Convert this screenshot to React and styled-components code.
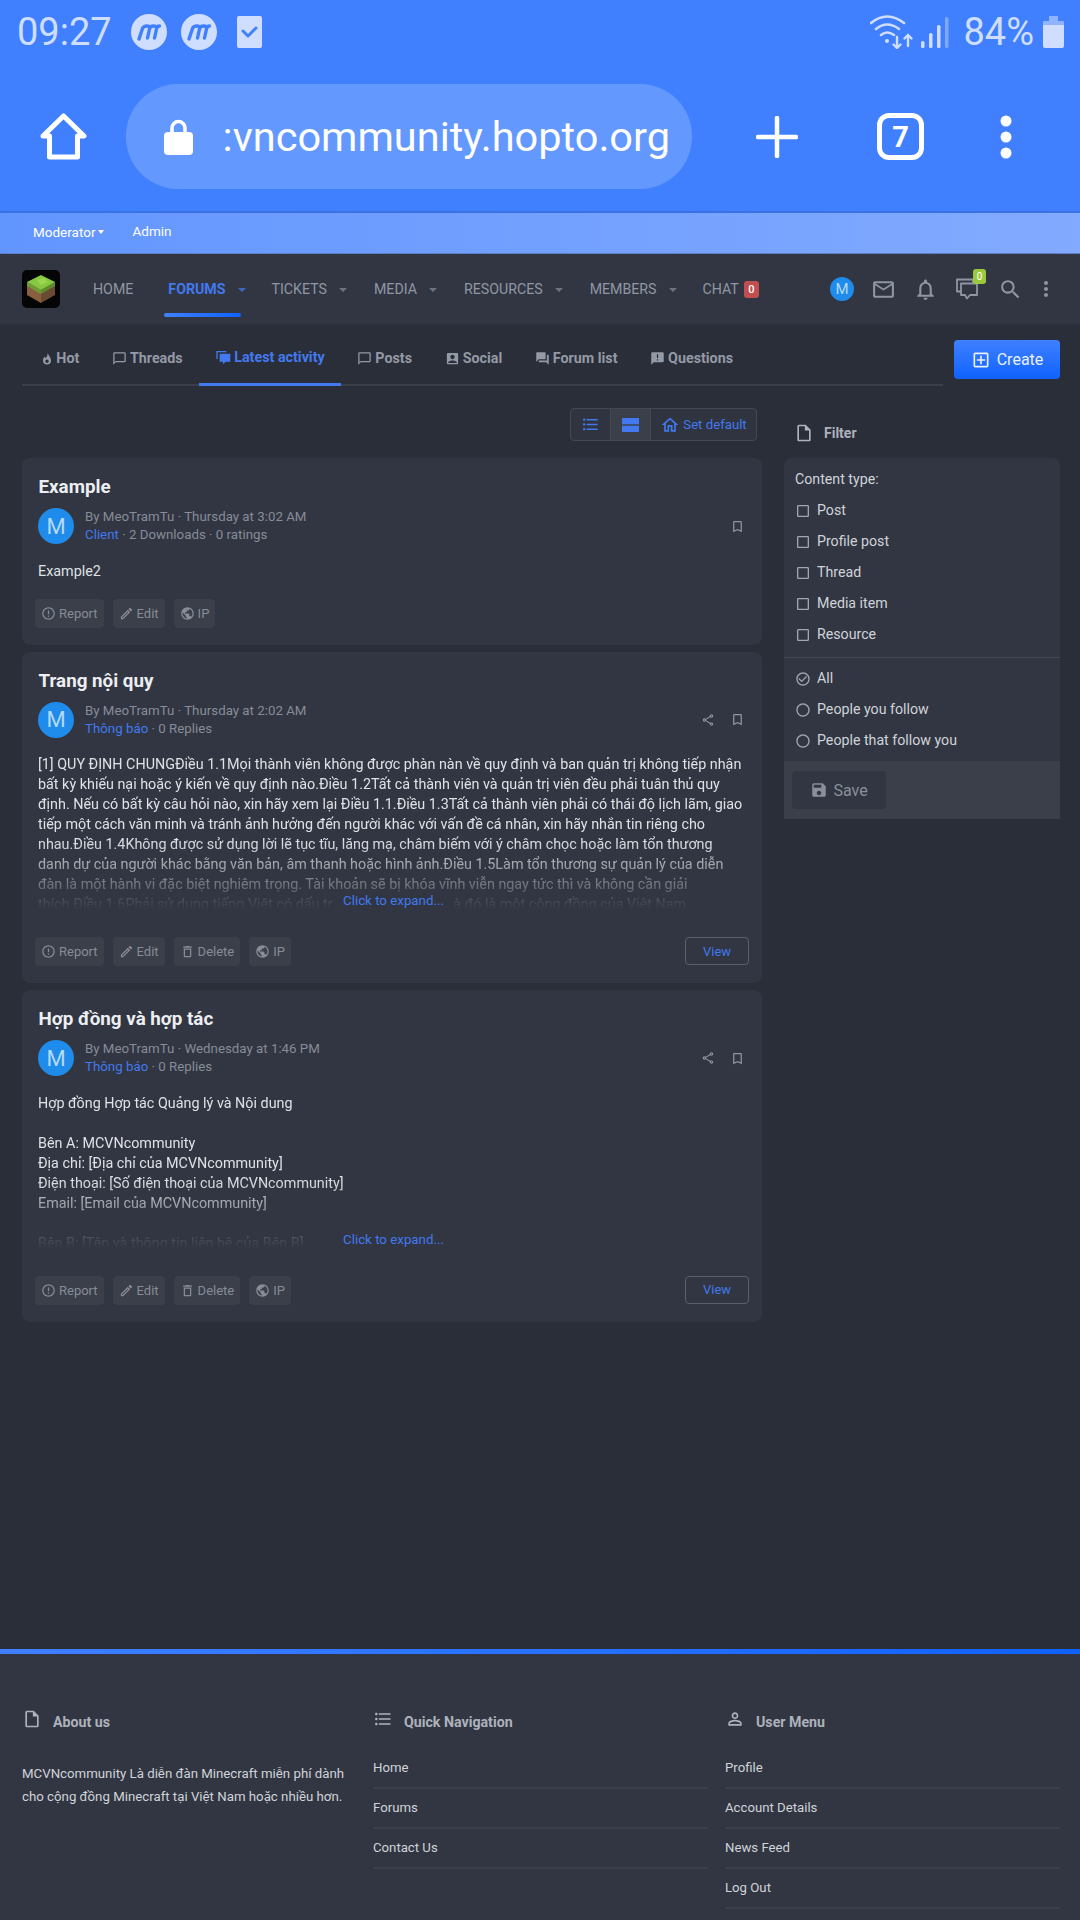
import React from 'react';
import styled, {createGlobalStyle} from 'styled-components';
import {
	MdChatBubbleOutline, MdAccountBox, MdForum, MdAnnouncement,
	MdFormatListBulleted, MdOutlineHome, MdErrorOutline, MdOutlineEdit,
	MdDeleteOutline, MdPublic, MdBookmarkBorder, MdOutlineShare, MdOutlineInsertDriveFile,
	MdSave, MdOutlineAddBox, MdOutlineEmail, MdNotificationsNone, MdSearch, MdMoreVert,
	MdPersonOutline, MdCheckBoxOutlineBlank, MdRadioButtonUnchecked, MdCheckCircleOutline
} from 'react-icons/md';

const BLUE = '#4279ee';
const CARD = '#313642';

const GlobalStyle = createGlobalStyle`
	html, body {
		margin: 0;
		padding: 0;
		background: #2a2e39;
	}
	* {
		box-sizing: border-box;
	}
`;

const Page = styled.div`
	display: flex;
	flex-direction: column;
	width: 1080px;
	height: 1920px;
	overflow: hidden;
	font-family: Roboto, "Noto Sans", sans-serif;
	background: #2a2e39;
`;

/* phone chrome */
const Chrome = styled.div`
	height: 213px;
	flex: none;
	background: #4080ff;
	border-bottom: 2px solid #3a72e6;
`;

const StatusBar = styled.div`
	display: flex;
	align-items: center;
	height: 64px;
	padding: 0 16px 0 17px;
	color: #cfdeff;
`;

const Clock = styled.div`
	font-size: 38px;
	line-height: 1;
	width: 114px;
`;

const StatusIcon = styled.svg`
	display: block;
	flex: none;
	margin-right: ${props => props.$gap || 0}px;
`;

const Spacer = styled.div`
	flex: 1;
`;

const Battery = styled.div`
	font-size: 38px;
	line-height: 1;
	margin: 0 9px 0 14px;
`;

const BrowserBar = styled.div`
	display: flex;
	align-items: center;
	height: 105px;
	margin-top: 20px;
	padding-left: 40px;
`;

const AddressPill = styled.div`
	display: flex;
	align-items: center;
	width: 566px;
	height: 105px;
	margin-left: 39px;
	padding-left: 38px;
	border-radius: 52px;
	background: #6398ff;
`;

const Address = styled.div`
	width: 449px;
	margin-left: 28px;
	font-size: 41.5px;
	line-height: 1.3;
	color: #fff;
	white-space: nowrap;
	text-align: right;
`;

const TabCount = styled.div`
	display: flex;
	align-items: center;
	justify-content: center;
	width: 47px;
	height: 47px;
	margin-left: 79px;
	border: 5px solid #fff;
	border-radius: 12px;
	font-size: 29px;
	font-weight: 700;
	color: #fff;
`;

/* staff bar */
const StaffBar = styled.div`
	display: flex;
	align-items: center;
	flex: none;
	height: 41px;
	padding: 0 33px 4px;
	background: linear-gradient(90deg, #6296ff, #82aaff);
	border-bottom: 1px solid #5e7fc4;
	font-size: 13.5px;
	color: #fff;
`;

const StaffLink = styled.span`
	display: flex;
	align-items: center;
	margin-right: ${props => props.$gap || 0}px;
	transform: translateY(${props => props.$shift || 0}px);
`;

const SmallCaret = styled.i`
	display: inline-block;
	margin-left: 3px;
	border: 3px solid transparent;
	border-top: 4px solid currentColor;
	border-bottom: 0;
`;

/* main nav */
const Nav = styled.nav`
	display: flex;
	align-items: center;
	flex: none;
	height: 71px;
	padding: 0 22px 0 22px;
	background: ${CARD};
	border-bottom: 1px solid #2c303b;
`;

const Logo = styled.svg`
	display: block;
	flex: none;
	margin-right: 33px;
`;

const NavItem = styled.a`
	position: relative;
	display: flex;
	align-items: center;
	margin-right: ${props => props.$gap}px;
	font-size: 14.2px;
	font-weight: ${props => props.$active ? 700 : 400};
	color: ${props => props.$active ? BLUE : '#9096a3'};
	text-transform: uppercase;
	${props => props.$active && `
		&::after {
			content: '';
			position: absolute;
			left: -4px;
			right: 5px;
			bottom: -20px;
			height: 4px;
			border-radius: 2px;
			background: linear-gradient(90deg, #4080ff, #0f62fe);
		}
	`}
`;

const NavCaret = styled.i`
	display: block;
	margin-left: 12px;
	border: 4px solid transparent;
	border-top: 4px solid ${props => props.$active ? '#3f68bd' : '#6d727e'};
	border-bottom: 0;
	margin-top: 2px;
`;

const Badge = styled.span`
	display: flex;
	align-items: center;
	justify-content: center;
	width: 15px;
	height: 17px;
	margin-left: 5px;
	border-radius: 3px;
	background: #c0504f;
	color: #fff;
	font-size: 11px;
	font-weight: 500;
`;

const NavIcons = styled.div`
	display: flex;
	align-items: center;
	margin-left: auto;
	color: #8f95a3;
`;

const NavIconSlot = styled.span`
	position: relative;
	display: flex;
	margin-left: ${props => props.$gap}px;
`;

const AlertBadge = styled.span`
	position: absolute;
	top: -8px;
	right: -7px;
	display: flex;
	align-items: center;
	justify-content: center;
	width: 13px;
	height: 15px;
	border-radius: 3px;
	background: #9ac93b;
	color: #fff;
	font-size: 10px;
`;

const Avatar = styled.div`
	display: flex;
	align-items: center;
	justify-content: center;
	flex: none;
	width: ${props => props.$size}px;
	height: ${props => props.$size}px;
	border-radius: 50%;
	background: #1f8bea;
	color: #b5d9f7;
	font-size: ${props => Math.round(props.$size * 0.62)}px;
`;

/* body */
const Main = styled.main`
	flex: 1;
	min-height: 0;
	padding: 0 20px 0 22px;
`;

const TabRow = styled.div`
	display: flex;
	align-items: flex-start;
	padding-top: 14px;
`;

const Tabs = styled.div`
	display: flex;
	flex: 1;
	height: 47px;
	padding-left: 3px;
	border-bottom: 2px solid #3a3f4a;
`;

const Tab = styled.a`
	display: flex;
	align-items: center;
	gap: 3px;
	height: 47px;
	padding: 0 16.3px 9px;
	font-size: 14.3px;
	font-weight: 700;
	color: ${props => props.$active ? BLUE : '#9499a6'};
	border-bottom: ${props => props.$active ? `3px solid ${BLUE}` : '0'};
	white-space: nowrap;
`;

const CreateButton = styled.button`
	display: flex;
	align-items: center;
	justify-content: center;
	gap: 6px;
	width: 106px;
	height: 39px;
	margin: 1px 0 0 11px;
	border: 0;
	border-radius: 4px;
	background: linear-gradient(180deg, #3f80ff, #0f62fe);
	color: #e9f0ff;
	font-family: inherit;
	font-size: 16px;
`;

const Columns = styled.div`
	display: flex;
	align-items: flex-start;
	gap: 22px;
`;

const Feed = styled.div`
	display: flex;
	flex-direction: column;
	width: 740px;
	gap: 7px;
`;

const ToggleBar = styled.div`
	display: flex;
	justify-content: flex-end;
	height: 65px;
	padding: 22px 5px 0 0;
`;

const ToggleGroup = styled.div`
	display: flex;
	height: 33px;
	border: 1px solid #434854;
	border-radius: 4px;
	background: #2f3440;
	color: ${BLUE};
`;

const ToggleButton = styled.span`
	display: flex;
	align-items: center;
	justify-content: center;
	gap: 3px;
	width: ${props => props.$width}px;
	font-size: 13.2px;
	background: ${props => props.$on ? '#3a3f4a' : 'transparent'};
	border-left: ${props => props.$first ? '0' : '1px solid #434854'};
`;

const Card = styled.article`
	display: flex;
	flex-direction: column;
	padding: 17px 13px 17px 16px;
	border-radius: 8px;
	background: ${CARD};
`;

const CardTitle = styled.h2`
	margin: 0 0 8px 0.5px;
	font-size: 18.8px;
	line-height: 25px;
	font-weight: 700;
	color: #eceef1;
`;

const MetaRow = styled.div`
	display: flex;
	align-items: center;
	gap: 11px;
`;

const MetaText = styled.div`
	flex: 1;
	font-size: 13.3px;
	line-height: 18px;
	color: #878c97;
`;

const Link = styled.span`
	color: ${BLUE};
`;

const MetaIcons = styled.div`
	display: flex;
	align-items: center;
	gap: 15px;
	color: #8f95a3;
	padding-right: 4px;
`;

const Body = styled.div`
	position: relative;
	margin: 17.5px 0 0;
	font-size: 14.35px;
	line-height: 20px;
	color: #dfe1e5;
	${props => props.$clipped && `
		height: 160px;
		margin-bottom: 22px;
	`}
	${props => !props.$clipped && `
		margin-bottom: 17px;
	`}
`;

const BodyText = styled.div`
	width: 708px;
	${props => props.$clipped && `
		height: 160px;
		overflow: hidden;
		-webkit-mask-image: linear-gradient(#000 85px, transparent 155px);
		mask-image: linear-gradient(#000 85px, transparent 155px);
	`}
`;

const Expand = styled.a`
	position: absolute;
	left: 0;
	right: 0;
	bottom: 5px;
	text-align: center;
	font-size: 13.3px;
	line-height: 18px;
	color: ${BLUE};
	span {
		padding: 0 10px;
		background: ${CARD};
	}
`;

const ActionRow = styled.div`
	display: flex;
	align-items: flex-start;
	gap: 9px;
	margin-left: -3px;
`;

const ActionButton = styled.a`
	display: flex;
	align-items: center;
	gap: 3px;
	height: 29px;
	padding: 0 6px;
	border-radius: 4px;
	background: #3a3f4a;
	color: #878c97;
	font-size: 13px;
`;

const ViewButton = styled.a`
	display: flex;
	align-items: center;
	justify-content: center;
	width: 64px;
	height: 28px;
	margin-left: auto;
	border: 1px solid #5a606c;
	border-radius: 4px;
	color: ${BLUE};
	font-size: 13px;
`;

const Side = styled.aside`
	width: 276px;
	padding-top: 28px;
`;

const SideHead = styled.div`
	display: flex;
	align-items: center;
	height: 38px;
	margin-bottom: 6px;
	padding-left: 10px;
	gap: 10px;
	color: #aeb2bc;
	font-size: 14px;
	font-weight: 700;
`;

const Panel = styled.div`
	border-radius: 8px 8px 0 0;
	background: ${CARD};
	color: #d0d3d9;
	font-size: 14.2px;
	overflow: hidden;
`;

const PanelSection = styled.div`
	padding: ${props => props.$line ? '12px 11px 7px' : '5px 11px 5px'};
	border-bottom: ${props => props.$line ? '1px solid #434854' : '0'};
`;

const PanelLabel = styled.div`
	height: 20px;
	margin-bottom: 5px;
	line-height: 18px;
`;

const Option = styled.div`
	display: flex;
	align-items: center;
	gap: 6px;
	height: 31px;
	color: #d0d3d9;
	svg {
		color: #a0a5b0;
	}
`;

const OptionLabel = styled.div`
	height: 20px;
	line-height: 18px;
`;

const PanelFooter = styled.div`
	padding: 10px 8px 10px;
	background: #3a3f4a;
`;

const SaveButton = styled.button`
	display: flex;
	align-items: center;
	justify-content: center;
	gap: 5px;
	width: 94px;
	height: 38px;
	border: 0;
	border-radius: 4px;
	background: #313642;
	color: #8a8f9a;
	font-family: inherit;
	font-size: 16px;
`;

/* footer */
const Footer = styled.footer`
	flex: none;
	height: 271px;
	padding: 0 20px 0 22px;
	background: ${CARD};
	border-top: 5px solid #0f62fe;
	border-image: linear-gradient(90deg, #4080ff, #0f62fe) 1;
`;

const FooterGrid = styled.div`
	display: grid;
	grid-template-columns: 334px 335px 335px;
	gap: 17px;
	padding-top: 56px;
`;

const FooterHead = styled.div`
	display: flex;
	align-items: center;
	gap: 11px;
	height: 24px;
	margin-bottom: 14.5px;
	color: #aeb2bc;
	font-size: 14.2px;
	font-weight: 700;
	svg {
		transform: translateY(-3px);
	}
`;

const FooterText = styled.p`
	margin: 29px 0 0;
	font-size: 13.25px;
	line-height: 22.5px;
	color: #d0d3d9;
`;

const FooterLink = styled.a`
	display: flex;
	align-items: center;
	height: 40px;
	border-bottom: 2px solid #3a3f4a;
	font-size: 13.2px;
	color: #d0d3d9;
`;

const AppIcon = () => (
	<StatusIcon width="36" height="36" viewBox="0 0 36 36" $gap={14}>
		<circle cx="18" cy="18" r="18" fill="#cfdeff"/>
		<path d="M8 25 L11.500 14.500 Q12.500 12 16 12 Q19 12 18.500 15 L16.500 24 M18.500 15 Q19 12 22.500 12 Q26 12 25.500 15 L23.500 24 M25.500 15 Q26 12 28.500 12" fill="none" stroke="#4080ff" strokeWidth="3.4" strokeLinecap="round" strokeLinejoin="round"/>
	</StatusIcon>
);

const StatusIcons = () => (
	<React.Fragment>
		<AppIcon/>
		<AppIcon/>
		<StatusIcon width="25" height="32" viewBox="0 0 25 32" style={{marginLeft: 6}}>
			<rect width="25" height="32" rx="2" fill="#cfdeff"/>
			<path d="M6 15 L11 20 L19 12" fill="none" stroke="#4080ff" strokeWidth="3" strokeLinecap="round" strokeLinejoin="round"/>
		</StatusIcon>
		<Spacer/>
		<StatusIcon width="44" height="34" viewBox="0 0 44 34" fill="none" stroke="#cfdeff" strokeLinecap="round" strokeWidth="2.6" style={{marginRight: 7}}>
			<path d="M1 8 Q17 -5 34 8"/>
			<path d="M6 14 Q17 5 29 14"/>
			<path d="M11 20 Q17 15 24 20"/>
			<circle cx="17" cy="26" r="2" fill="#cfdeff" stroke="none"/>
			<path d="M27 22 V33 M23.5 29.5 L27 33 L30.5 29.5" strokeWidth="2.4"/>
			<path d="M38 31 V20 M34.5 23.5 L38 20 L41.500 23.5" strokeWidth="2.4"/>
		</StatusIcon>
		<StatusIcon width="28" height="31" viewBox="0 0 28 31">
			<rect x="0" y="24" width="3.500" height="7" rx="1.500" fill="#cfdeff"/>
			<rect x="8" y="16" width="3.500" height="15" rx="1.500" fill="#cfdeff"/>
			<rect x="16" y="8" width="3.500" height="23" rx="1.500" fill="#cfdeff"/>
			<rect x="24" y="0" width="3.500" height="31" rx="1.500" fill="#7fa8ff"/>
		</StatusIcon>
		<Battery>84%</Battery>
		<StatusIcon width="21" height="32" viewBox="0 0 21 32">
			<rect x="6" y="0" width="9" height="5" fill="#8fb3ff"/>
			<rect x="0" y="5" width="21" height="5" rx="1" fill="#8fb3ff"/>
			<path d="M0 9 H21 V30 Q21 32 19 32 H2 Q0 32 0 30 Z" fill="#cfdeff"/>
		</StatusIcon>
	</React.Fragment>
);

const BrowserHome = () => (
	<StatusIcon width="47" height="47" viewBox="0 0 47 47" fill="none" stroke="#fff" strokeWidth="5" strokeLinejoin="round" strokeLinecap="round">
		<path d="M3 23 L23.500 3 L44 23 H37.500 V44 H9.500 V23 Z"/>
	</StatusIcon>
);

const LockIcon = () => (
	<StatusIcon width="29" height="36" viewBox="0 0 29 36" fill="#fff">
		<path d="M8 14 V9 A6.500 6.500 0 0 1 21 9 V14" fill="none" stroke="#fff" strokeWidth="3.500"/>
		<rect y="13" width="29" height="23" rx="4"/>
	</StatusIcon>
);

const PlusIcon = () => (
	<StatusIcon width="42" height="42" viewBox="0 0 42 42" style={{marginLeft: 64}}>
		<path d="M21 2 V40 M2 21 H40" stroke="#fff" strokeWidth="4.500" strokeLinecap="round"/>
	</StatusIcon>
);

const DotsIcon = () => (
	<StatusIcon width="12" height="44" viewBox="0 0 12 44" fill="#fff" style={{marginLeft: 76}}>
		<circle cx="6" cy="6" r="5.500"/>
		<circle cx="6" cy="22" r="5.500"/>
		<circle cx="6" cy="38" r="5.500"/>
	</StatusIcon>
);

const GrassLogo = () => (
	<Logo width="38" height="38" viewBox="0 0 38 38">
		<rect width="38" height="38" rx="5" fill="#050505"/>
		<path d="M5 12 L19 20 V33 L5 25 Z" fill="#8a5f3f"/>
		<path d="M33 12 L19 20 V33 L33 25 Z" fill="#6a4a33"/>
		<path d="M5 12 L19 20 V24 L5 16 Z" fill="#6f9a35"/>
		<path d="M33 12 L19 20 V24 L33 16 Z" fill="#5f8a2e"/>
		<path d="M19 5 L33 12 L19 20 L5 12 Z" fill="#86c940"/>
		<path d="M15 10 L22 8 L26 12 L19 15 Z" fill="#9ad64f"/>
	</Logo>
);

const FlameIcon = () => (
	<svg width="12" height="13" viewBox="0 0 12 13" fill="currentColor" fillRule="evenodd">
		<path d="M6.500 0.500 C7 3 10 5 10 8.500 A4 4 0 0 1 2 8.500 C2 6.500 3 5.500 3.500 4.500 C4 5.500 4.500 6 5 6 C6 4.500 7 2.500 6.500 0.500 Z M6 7.500 A1.700 1.700 0 1 0 6 10.900 A1.700 1.700 0 1 0 6 7.500 Z"/>
	</svg>
);

const StackedBubbles = ({size = 16, filled}) => (
	<svg width={size} height={size} viewBox="0 0 24 24" fill={filled ? 'currentColor' : 'none'} stroke="currentColor" strokeWidth={filled ? 0 : 1.8} strokeLinejoin="round">
		{filled ? (
			<React.Fragment>
				<path d="M2 3 H17 V5 H4 V15 H2 Z"/>
				<path d="M7 7 H23 V19 H16 L12 23 V19 H7 Z"/>
			</React.Fragment>
		) : (
			<React.Fragment>
				<path d="M18 6 V2.500 H2 V14.500 H6"/>
				<path d="M6 6.500 H22 V18 H15 L12 21.500 L10 18 H6 Z"/>
			</React.Fragment>
		)}
	</svg>
);

const SplitViewIcon = () => (
	<svg width="17" height="14" viewBox="0 0 17 14" fill="currentColor">
		<rect width="17" height="6.300"/>
		<rect y="7.700" width="17" height="6.300"/>
	</svg>
);

const NAV_ITEMS = [
	{label: 'Home', gap: 35},
	{label: 'Forums', gap: 26, caret: true, active: true},
	{label: 'Tickets', gap: 27, caret: true},
	{label: 'Media', gap: 27, caret: true},
	{label: 'Resources', gap: 27, caret: true},
	{label: 'Members', gap: 26, caret: true},
	{label: 'Chat', gap: 0, badge: '0'}
];

const TABS = [
	{label: 'Hot', icon: <FlameIcon/>},
	{label: 'Threads', icon: <MdChatBubbleOutline size={15}/>},
	{label: 'Latest activity', icon: <StackedBubbles filled/>, active: true},
	{label: 'Posts', icon: <MdChatBubbleOutline size={15}/>},
	{label: 'Social', icon: <MdAccountBox size={15}/>},
	{label: 'Forum list', icon: <MdForum size={15}/>},
	{label: 'Questions', icon: <MdAnnouncement size={15}/>}
];

const ACTIONS = {
	report: {label: 'Report', icon: <MdErrorOutline size={15}/>},
	edit: {label: 'Edit', icon: <MdOutlineEdit size={15}/>},
	del: {label: 'Delete', icon: <MdDeleteOutline size={15}/>},
	ip: {label: 'IP', icon: <MdPublic size={15}/>}
};

const RULES = `[1] QUY ĐỊNH CHUNGĐiều 1.1Mọi thành viên không được phàn nàn về quy định và ban quản trị không tiếp nhận bất kỳ khiếu nại hoặc ý kiến về quy định nào.Điều 1.2Tất cả thành viên và quản trị viên đều phải tuân thủ quy định. Nếu có bất kỳ câu hỏi nào, xin hãy xem lại Điều 1.1.Điều 1.3Tất cả thành viên phải có thái độ lịch lãm, giao tiếp một cách văn minh và tránh ảnh hưởng đến người khác với vấn đề cá nhân, xin hãy nhắn tin riêng cho nhau.Điều 1.4Không được sử dụng lời lẽ tục tĩu, lăng mạ, châm biếm với ý châm chọc hoặc làm tổn thương danh dự của người khác bằng văn bản, âm thanh hoặc hình ảnh.Điều 1.5Làm tổn thương sự quản lý của diễn đàn là một hành vi đặc biệt nghiêm trọng. Tài khoản sẽ bị khóa vĩnh viễn ngay tức thì và không cần giải thích.Điều 1.6Phải sử dụng tiếng Việt có dấu trong mọi giao tiếp và đó là một cộng đồng của Việt Nam`;

const CONTRACT = [
	'Hợp đồng Hợp tác Quảng lý và Nội dung',
	'',
	'Bên A: MCVNcommunity',
	'Địa chỉ: [Địa chỉ của MCVNcommunity]',
	'Điện thoại: [Số điện thoại của MCVNcommunity]',
	'Email: [Email của MCVNcommunity]',
	'',
	'Bên B: [Tên và thông tin liên hệ của Bên B]',
	'Địa chỉ: [Địa chỉ của Bên B]'
];

const FeedCard = ({title, date, category, stats, clipped, share, actions, children}) => (
	<Card>
		<CardTitle>{title}</CardTitle>
		<MetaRow>
			<Avatar $size={36}>M</Avatar>
			<MetaText>
				<div>By MeoTramTu · {date}</div>
				<div><Link>{category}</Link> · {stats}</div>
			</MetaText>
			<MetaIcons>
				{share && <MdOutlineShare size={14}/>}
				<MdBookmarkBorder size={15}/>
			</MetaIcons>
		</MetaRow>
		<Body $clipped={clipped}>
			<BodyText $clipped={clipped}>{children}</BodyText>
			{clipped && <Expand><span>Click to expand...</span></Expand>}
		</Body>
		<ActionRow>
			{actions.map(key => (
				<ActionButton key={key}>
					{ACTIONS[key].icon}
					{ACTIONS[key].label}
				</ActionButton>
			))}
			{clipped && <ViewButton>View</ViewButton>}
		</ActionRow>
	</Card>
);

const FooterColumn = ({icon, title, links}) => (
	<div>
		<FooterHead>{icon}{title}</FooterHead>
		{links.map(link => <FooterLink key={link}>{link}</FooterLink>)}
	</div>
);

export default function App() {
	return (
		<Page>
			<GlobalStyle/>
			<Chrome>
				<StatusBar>
					<Clock>09:27</Clock>
					<StatusIcons/>
				</StatusBar>
				<BrowserBar>
					<BrowserHome/>
					<AddressPill>
						<LockIcon/>
						<Address>:vncommunity.hopto.org</Address>
					</AddressPill>
					<PlusIcon/>
					<TabCount>7</TabCount>
					<DotsIcon/>
				</BrowserBar>
			</Chrome>
			<StaffBar>
				<StaffLink $gap={28} $shift={1}>Moderator<SmallCaret/></StaffLink>
				<StaffLink>Admin</StaffLink>
			</StaffBar>
			<Nav>
				<GrassLogo/>
				{NAV_ITEMS.map(item => (
					<NavItem key={item.label} $active={item.active} $gap={item.gap}>
						{item.label}
						{item.caret && <NavCaret $active={item.active}/>}
						{item.badge && <Badge>{item.badge}</Badge>}
					</NavItem>
				))}
				<NavIcons>
					<Avatar $size={24}>M</Avatar>
					<NavIconSlot $gap={17}><MdOutlineEmail size={25}/></NavIconSlot>
					<NavIconSlot $gap={17}><MdNotificationsNone size={25}/></NavIconSlot>
					<NavIconSlot $gap={17}>
						<StackedBubbles size={24}/>
						<AlertBadge>0</AlertBadge>
					</NavIconSlot>
					<NavIconSlot $gap={19}><MdSearch size={25}/></NavIconSlot>
					<NavIconSlot $gap={11}><MdMoreVert size={24}/></NavIconSlot>
				</NavIcons>
			</Nav>
			<Main>
				<TabRow>
					<Tabs>
						{TABS.map(tab => (
							<Tab key={tab.label} $active={tab.active}>{tab.icon}{tab.label}</Tab>
						))}
					</Tabs>
					<CreateButton><MdOutlineAddBox size={20}/>Create</CreateButton>
				</TabRow>
				<Columns>
					<Feed>
						<ToggleBar>
							<ToggleGroup>
								<ToggleButton $first $width={39}><MdFormatListBulleted size={19}/></ToggleButton>
								<ToggleButton $on $width={40}><SplitViewIcon/></ToggleButton>
								<ToggleButton $width={106}><MdOutlineHome size={20}/>Set default</ToggleButton>
							</ToggleGroup>
						</ToggleBar>
						<FeedCard
							title="Example"
							date="Thursday at 3:02 AM"
							category="Client"
							stats="2 Downloads · 0 ratings"
							actions={['report', 'edit', 'ip']}
						>
							Example2
						</FeedCard>
						<FeedCard
							title="Trang nội quy"
							date="Thursday at 2:02 AM"
							category="Thông báo"
							stats="0 Replies"
							clipped
							share
							actions={['report', 'edit', 'del', 'ip']}
						>
							{RULES}
						</FeedCard>
						<FeedCard
							title="Hợp đồng và hợp tác"
							date="Wednesday at 1:46 PM"
							category="Thông báo"
							stats="0 Replies"
							clipped
							share
							actions={['report', 'edit', 'del', 'ip']}
						>
							{CONTRACT.map((line, i) => <div key={i}>{line || '\u00a0'}</div>)}
						</FeedCard>
					</Feed>
					<Side>
						<SideHead><MdOutlineInsertDriveFile size={20}/>Filter</SideHead>
						<Panel>
							<PanelSection $line>
								<PanelLabel>Content type:</PanelLabel>
								{['Post', 'Profile post', 'Thread', 'Media item', 'Resource'].map(label => (
									<Option key={label}><MdCheckBoxOutlineBlank size={16}/><OptionLabel>{label}</OptionLabel></Option>
								))}
							</PanelSection>
							<PanelSection>
								<Option><MdCheckCircleOutline size={16}/><OptionLabel>All</OptionLabel></Option>
								<Option><MdRadioButtonUnchecked size={16}/><OptionLabel>People you follow</OptionLabel></Option>
								<Option><MdRadioButtonUnchecked size={16}/><OptionLabel>People that follow you</OptionLabel></Option>
							</PanelSection>
							<PanelFooter>
								<SaveButton><MdSave size={18}/>Save</SaveButton>
							</PanelFooter>
						</Panel>
					</Side>
				</Columns>
			</Main>
			<Footer>
				<FooterGrid>
					<div>
						<FooterHead><MdOutlineInsertDriveFile size={20}/>About us</FooterHead>
						<FooterText>MCVNcommunity Là diễn đàn Minecraft miễn phí dành cho cộng đồng Minecraft tại Việt Nam hoặc nhiều hơn.</FooterText>
					</div>
					<FooterColumn
						icon={<MdFormatListBulleted size={20}/>}
						title="Quick Navigation"
						links={['Home', 'Forums', 'Contact Us']}
					/>
					<FooterColumn
						icon={<MdPersonOutline size={20}/>}
						title="User Menu"
						links={['Profile', 'Account Details', 'News Feed', 'Log Out']}
					/>
				</FooterGrid>
			</Footer>
		</Page>
	);
}
